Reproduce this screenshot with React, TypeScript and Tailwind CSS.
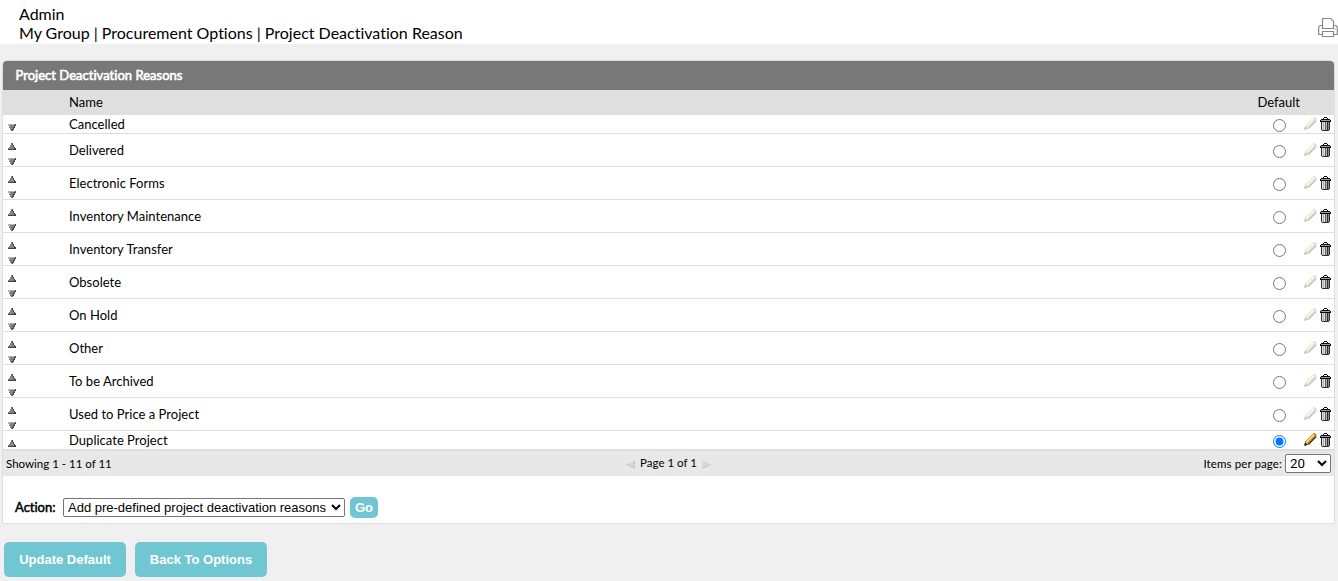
import React, { useState } from 'react';

interface Reason {
  id: number;
  name: string;
}

const initialReasons: Reason[] = [
  { id: 1, name: 'Cancelled' },
  { id: 2, name: 'Delivered' },
  { id: 3, name: 'Electronic Forms' },
  { id: 4, name: 'Inventory Maintenance' },
  { id: 5, name: 'Inventory Transfer' },
  { id: 6, name: 'Obsolete' },
  { id: 7, name: 'On Hold' },
  { id: 8, name: 'Other' },
  { id: 9, name: 'To be Archived' },
  { id: 10, name: 'Used to Price a Project' },
  { id: 11, name: 'Duplicate Project' },
];

const PrinterIcon = () => (
  <svg width="20" height="21" viewBox="0 0 20 21" fill="none" stroke="#8b858f" strokeWidth="1.2">
    <path d="M4.500 11.500V1.500h8l3 3v7z" />
    <path d="M4.500 8.500H3Q.7 8.500 .7 11V17.500h3.800M15.500 8.500H17q2.300 0 2.300 2.500v6.500h-3.800" />
    <path d="M4.500 14.500h11v5h-11z" />
    <path d="M16.500 12h1.200" />
  </svg>
);

const UpIcon = () => (
  <svg width="8" height="7" viewBox="0 0 8 7" shapeRendering="crispEdges">
    <path d="M3 0h2v2h1v2h1v1h1v2H0V5h1V4h1V2h1z" fill="#858585" />
    <path d="M4 0h1v2h1v2h1v1h1v2H0V6h6V4H5V2H4z" fill="#424242" />
  </svg>
);

const DownIcon = () => (
  <svg width="8" height="7" viewBox="0 0 8 7" shapeRendering="crispEdges">
    <path d="M0 0h8v2H7v2H6v2H5v1H3V6H2V4H1V2H0z" fill="#808080" />
    <path d="M0 0h7v1H2v2H1V2H0z" fill="#b5b5b5" />
    <path d="M7 0h1v2H7v2H6v2H5v1H4V5h1V3h1V1h1z" fill="#484848" />
  </svg>
);

const PencilIcon = ({ active }: { active: boolean }) => (
  <svg width="13" height="13" viewBox="0 0 13 13">
    <path
      d="M.7 12.300 1.500 8.800 9.300 1q1.200-1 2.200 0t0 2.700L4 11.300z"
      fill={active ? '#e39a25' : '#eee6cf'}
      stroke={active ? '#8a5510' : '#d8d2c2'}
      strokeWidth=".9"
    />
    <path d="M2.700 8.700 9.800 1.600" stroke={active ? '#ffdb92' : '#fbf7ec'} strokeWidth="1.500" />
    <path d="M4.300 11.500 12.200 3.700" stroke={active ? '#352309' : '#bfbfb8'} strokeWidth="1.100" />
    <path d="m.3 12.700.9-3.200 2.300 2.200z" fill={active ? '#161616' : '#b9c3cd'} />
    <path d="m1.500 9.300 1.800 1.800.5-.9-1.300-1.300z" fill={active ? '#eed1a0' : '#e8e8e6'} />
  </svg>
);

const TrashIcon = () => (
  <svg width="11" height="14" viewBox="0 0 11 14" shapeRendering="crispEdges">
    <path d="M4 0h3v1H4zM3 1h1v1H3zM7 1h1v1H7zM1 2h9v1H1zM0 3h11v2H0z" fill="#080808" />
    <path d="M1 3h9v1H1z" fill="#a0a0a0" />
    <path d="M1 5h9v8H9v1H2v-1H1z" fill="#303030" />
    <path d="M2 5h1v8H2zM4 5h1v8H4z" fill="#ddd" />
    <path d="M3 5h1v8H3zM6 5h1v8H6z" fill="#b0b0b0" />
    <path d="M5 5h1v8H5z" fill="#666" />
    <path d="M8 5h1v8H8z" fill="#8a8a8a" />
  </svg>
);

const PageArrow = ({ back }: { back?: boolean }) => (
  <svg className="mt-0.5" width="9" height="9" viewBox="0 0 9 9">
    {back ? (
      <>
        <path d="M8.500.5v8L0 4.500z" fill="#d6d6d6" />
        <path d="M0 4.500l8.500 4v-8" fill="none" stroke="#c3c3c3" strokeWidth=".8" />
      </>
    ) : (
      <>
        <path d="M.5.5v8L9 4.500z" fill="#d6d6d6" />
        <path d="M.5 8.500 9 4.500" stroke="#bcbcbc" strokeWidth=".8" />
      </>
    )}
  </svg>
);

const App: React.FC = () => {
  const [selected, setSelected] = useState(11);

  return (
    <div className="h-[581px] w-[1338px] overflow-hidden bg-[#f0f0f0] font-[Lato,sans-serif] text-[13px] text-black [font-variant-ligatures:none]">
      <header className="flex h-11 justify-between bg-white">
        <div className="pt-1 pl-[19px] text-base leading-[19px]">
          <div>Admin</div>
          <div>My Group | Procurement Options | Project Deactivation Reason</div>
        </div>
        <button className="mt-[17px] h-[21px]">
          <PrinterIcon />
        </button>
      </header>

      <main className="mt-4 ml-[2px] w-[1333px] rounded-t-[5px] border border-[#dedede] bg-white">
        <h2 className="h-[29px] rounded-t-[4px] bg-[#787878] pl-[12.5px] text-[13px] leading-[29px] tracking-[0.02px] text-white [-webkit-text-stroke:0.6px_white]">
          Project Deactivation Reasons
        </h2>
        <div className="flex h-[25px] justify-between bg-[#dfdfdf] pr-[34px] pl-[66px] leading-[25px]">
          <span>Name</span>
          <span>Default</span>
        </div>

        {initialReasons.map((reason, index) => {
          const first = index === 0;
          const last = index === initialReasons.length - 1;
          return (
            <div
              key={reason.id}
              className={`flex items-center border-b border-[#dedede] ${first || last ? 'h-[19px]' : 'h-[33px]'}`}
            >
              <div className={`flex w-[66px] flex-col items-start gap-2 pl-[5px] ${first || last ? 'pt-[7px]' : 'pt-2'}`}>
                {!first && <UpIcon />}
                {!last && <DownIcon />}
              </div>
              <span className="flex-1 leading-[18px] tracking-[0.02px]">{reason.name}</span>
              <input
                type="radio"
                name="default"
                className="mt-[3px] mr-[18px] h-[13px] w-[13px]"
                checked={selected === reason.id}
                onChange={() => setSelected(reason.id)}
              />
              <button className="mr-[3px] mb-px h-[13px]">
                <PencilIcon active={selected === reason.id} />
              </button>
              <button className="mr-[3px] h-[14px]">
                <TrashIcon />
              </button>
            </div>
          );
        })}

        <div className="grid h-[26px] grid-cols-3 items-center border-t border-[#dedede] bg-[#e8e8e8] text-[11.500px]">
          <span className="pl-[3px]">Showing 1 - 11 of 11</span>
          <div className="flex items-center justify-center gap-[5px]">
            <PageArrow back />
            <span className="-mt-px">Page 1 of 1</span>
            <PageArrow />
          </div>
          <div className="flex items-center justify-end gap-[3px] pr-[3px]">
            <span className="tracking-[0.1px]">Items per page:</span>
            <select className="h-[19px] w-[46px] rounded-[2px] border border-[#767676] bg-white font-[Roboto,sans-serif] text-[13.333px]">
              <option>20</option>
            </select>
          </div>
        </div>

        <div className="flex h-[47px] items-center pt-4 pl-3">
          <label className="w-[48px] [-webkit-text-stroke:0.5px_black]">Action:</label>
          <select className="h-[19px] w-[282px] rounded-[2px] border border-[#767676] bg-white font-['Liberation_Sans',sans-serif] text-[13px]">
            <option>Add pre-defined project deactivation reasons</option>
          </select>
          <button className="ml-[5px] h-[21px] w-7 rounded-[5px] bg-[#70c6d1] font-['Liberation_Sans',sans-serif] text-[13px] font-bold text-white">
            Go
          </button>
        </div>
      </main>

      <div className="mt-[18px] ml-1 flex gap-[9px] font-['Liberation_Sans',sans-serif] text-[13px] font-bold text-white">
        <button className="h-[35px] w-[122px] rounded-[5px] bg-[#70c6d1]">Update Default</button>
        <button className="h-[35px] w-[132px] rounded-[5px] bg-[#70c6d1]">Back To Options</button>
      </div>
    </div>
  );
};

export default App;
